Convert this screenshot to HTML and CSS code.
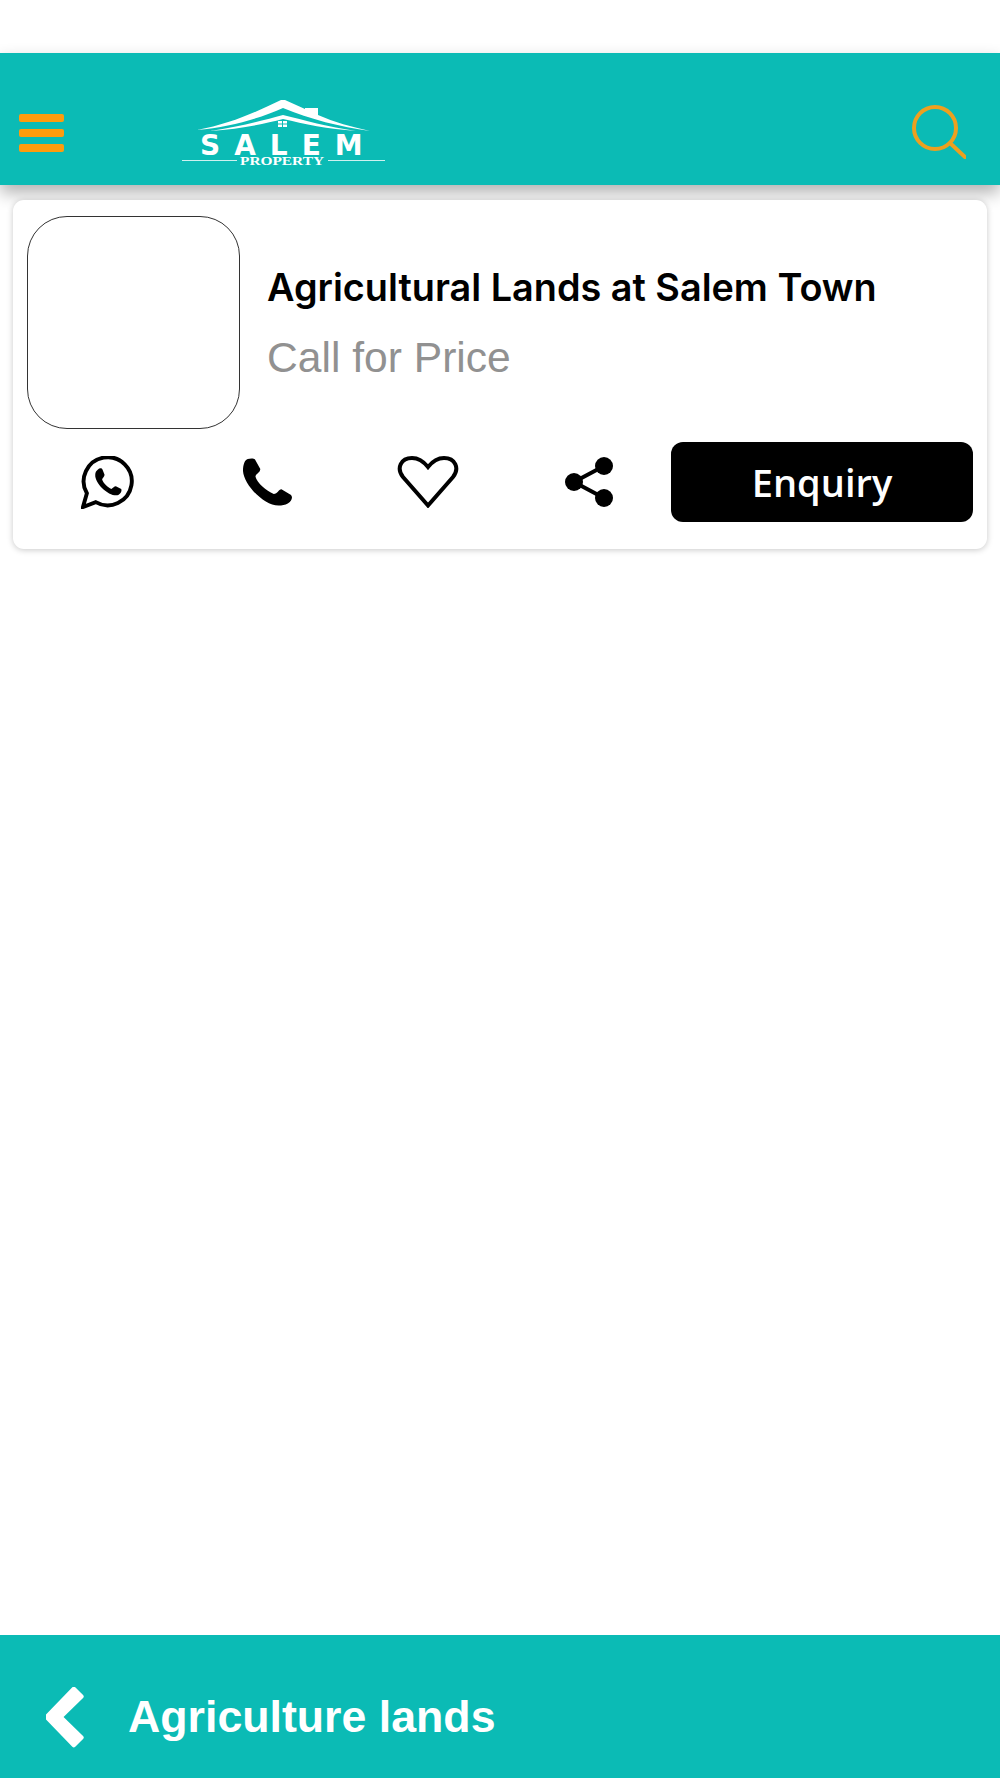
FILE: index.html
```html
<!DOCTYPE html>
<html lang="en">
<head>
  <meta charset="UTF-8">
  <meta name="viewport" content="width=device-width, initial-scale=1.0">
  <title>Agriculture lands</title>
  <link rel="stylesheet" href="styles.css">
</head>
<body>
  <header class="topbar">
    <button class="menu-btn" aria-label="Menu">
      <span class="menu-bar"></span>
      <span class="menu-bar"></span>
      <span class="menu-bar"></span>
    </button>
    <svg class="logo" viewBox="0 0 205 67" aria-label="Salem Property">
      <path class="logo-fill" d="M17 30 C50 24 76 12 101 0 L105 0 L125 9 L125 8 L138 8 L138 15 C154 22 172 27 190 31 C160 27 130 19 103 8 C78 19 50 27 17 30Z"/>
      <path class="logo-fill" d="M30 31 C60 27 84 20 103 15 C124 20 148 27 176 31 C148 29 124 24 103 19 C84 24 60 29 30 31Z"/>
      <rect class="logo-fill" x="98" y="21" width="4" height="2.500"/>
      <rect class="logo-fill" x="103" y="21" width="4" height="2.500"/>
      <rect class="logo-fill" x="98" y="24.500" width="4" height="2.500"/>
      <rect class="logo-fill" x="103" y="24.500" width="4" height="2.500"/>
      <text class="logo-name" x="20" y="55">SALEM</text>
      <path class="logo-line" d="M2 60.500H57M148 60.500H205"/>
      <text class="logo-sub" x="60" y="65" textLength="84" lengthAdjust="spacingAndGlyphs">PROPERTY</text>
    </svg>
    <svg class="search-icon" viewBox="0 0 54 54">
      <circle cx="23" cy="23" r="21" />
      <path d="M38 38 L53 52"/>
    </svg>
  </header>

  <main class="content">
    <section class="card">
      <div class="card-top">
        <div class="thumb"></div>
        <div class="card-info">
          <h2 class="card-title">Agricultural Lands at Salem Town</h2>
          <p class="card-price">Call for Price</p>
        </div>
      </div>
      <div class="card-actions">
        <a class="action">
          <svg class="ic-whatsapp" viewBox="0 0 54 54">
            <path class="ic-line" d="M2 52 L6 38 A24.500 24.500 0 1 1 15 47 Z"/>
            <path class="ic-solid" d="M17 14 C19 12 21 12 22 14 L24 19 C24 21 22 22 21.500 24 C23 28 27 32 31 33.500 C33 32.500 34 30.500 36 31 L41 33.500 C42 36 40 39 37 40 C28 41 14 28 14.500 19 C14.500 17 15.500 15 17 14Z"/>
          </svg>
        </a>
        <a class="action">
          <svg class="ic-phone" viewBox="0 0 51 49">
            <path class="ic-solid" d="M5 0.500 C2 1 0 6 0 13 C1 27 21 49 37 49 C44 49 51 46 51 40 L50 38 L40 32 C37 32 36 37 32 37 C24 33 15 26 13 19 C13 16 18 15 18 11 L12.500 1 C11 -0.500 7 0 5 0.500Z"/>
          </svg>
        </a>
        <a class="action">
          <svg class="ic-heart" viewBox="0 0 62 52">
            <path class="ic-line" d="M31 49.500 L6 21 C-1 12 4 2 15 2 C22 2 27 6 31 11 C35 6 40 2 47 2 C58 2 63 12 56 21 Z"/>
          </svg>
        </a>
        <a class="action">
          <svg class="ic-share" viewBox="0 0 48 50">
            <circle class="ic-solid" cx="39" cy="9" r="9"/>
            <circle class="ic-solid" cx="9" cy="25" r="9"/>
            <circle class="ic-solid" cx="39" cy="41" r="9"/>
            <path class="ic-link" d="M39 9 L9 25 L39 41"/>
          </svg>
        </a>
        <button class="enquiry-btn">Enquiry</button>
      </div>
    </section>
  </main>

  <footer class="bottombar">
    <svg class="back-icon" viewBox="0 0 40 62">
      <path d="M27 0 L0 28 C-1 29.500 -1 31.500 0 33 L27 61 C28 62 29 62 30 61 L38 53 C39 52 39 51 38 50 L18 30.500 L38 11 C39 10 39 9 38 8 L30 0 C29 -1 28 -1 27 0Z"/>
    </svg>
    <span class="bottom-title">Agriculture lands</span>
  </footer>
</body>
</html>
```

FILE: styles.css
```css
* {
  box-sizing: border-box;
}
html, body {
  height: 100%;
}
body {
  margin: 0;
  height: 1778px;
  display: flex;
  flex-direction: column;
  padding-top: 53px;
  background-color: #fff;
  font-family: "Liberation Sans", Arial, sans-serif;
}
.topbar {
  height: 132px;
  flex-shrink: 0;
  display: flex;
  align-items: flex-start;
  background-color: #0bbbb5;
  box-shadow: 0 8px 16px rgba(0,0,0,0.3);
}
.menu-btn {
  width: 45px;
  margin: 61px 0 0 19px;
  padding: 0;
  border: none;
  background: none;
  display: flex;
  flex-direction: column;
  gap: 7px;
}
.menu-bar {
  display: block;
  height: 8px;
  border-radius: 2px;
  background-color: #ff9c0d;
}
.logo {
  width: 205px;
  height: 67px;
  margin: 47px 0 0 116px;
}
.logo-fill {
  fill: #fff;
}
.logo-name {
  font-family: "DejaVu Sans", Arial, sans-serif;
  font-weight: bold;
  font-size: 28px;
  letter-spacing: 14px;
  fill: #fff;
}
.logo-sub {
  font-family: "Liberation Serif", serif;
  font-weight: bold;
  font-size: 13px;
  fill: #fff;
}
.logo-line {
  stroke: #fff;
  stroke-width: 1;
  opacity: 0.8;
  fill: none;
}
.search-icon {
  width: 54px;
  height: 54px;
  margin: 52px 0 0 auto;
  margin-right: 34px;
  fill: none;
  stroke: #eda01f;
  stroke-width: 4;
  stroke-linecap: round;
}
.content {
  flex: 1;
  padding: 15px 13px;
}
.card {
  height: 349px;
  padding: 16px 14px 0;
  background: #fff;
  border-radius: 11px;
  box-shadow: 0 1px 6px rgba(0,0,0,0.22);
}
.card-top {
  display: flex;
  align-items: center;
}
.thumb {
  width: 213px;
  height: 213px;
  border: 1px solid #333;
  border-radius: 40px;
  flex-shrink: 0;
}
.card-info {
  margin-left: 27px;
}
.card-title {
  margin: 0;
  font-family: Inter, Arial, sans-serif;
  font-size: 37.8px;
  font-weight: 600;
  line-height: 44px;
  color: #000;
}
.card-price {
  margin: 25px 0 0;
  font-size: 42.6px;
  line-height: 46px;
  color: #919191;
}
.card-actions {
  display: flex;
  align-items: center;
  margin-top: 13px;
}
.action {
  width: 160.5px;
  height: 80px;
  display: flex;
  align-items: center;
  justify-content: center;
  flex-shrink: 0;
}
.ic-line {
  fill: none;
  stroke: #000;
  stroke-width: 4;
}
.ic-solid {
  fill: #000;
}
.ic-link {
  fill: none;
  stroke: #000;
  stroke-width: 4;
}
.ic-whatsapp {
  width: 53px;
  height: 53px;
}
.ic-phone {
  width: 49px;
  height: 48px;
}
.ic-heart {
  width: 62px;
  height: 52px;
}
.ic-share {
  width: 48px;
  height: 50px;
}
.enquiry-btn {
  width: 302px;
  height: 80px;
  margin-left: auto;
  padding-bottom: 2px;
  border: none;
  border-radius: 12px;
  background-color: #000;
  color: #fff;
  font-family: "Open Sans", Arial, sans-serif;
  font-size: 38px;
  font-weight: 600;
}
.bottombar {
  height: 143px;
  flex-shrink: 0;
  display: flex;
  align-items: center;
  padding: 21px 0 0 46px;
  background-color: #0bbbb5;
}
.back-icon {
  width: 39px;
  height: 61px;
  fill: #fff;
}
.bottom-title {
  margin-left: 43px;
  margin-top: -1px;
  font-size: 44.7px;
  font-weight: 700;
  color: #fff;
}
```
